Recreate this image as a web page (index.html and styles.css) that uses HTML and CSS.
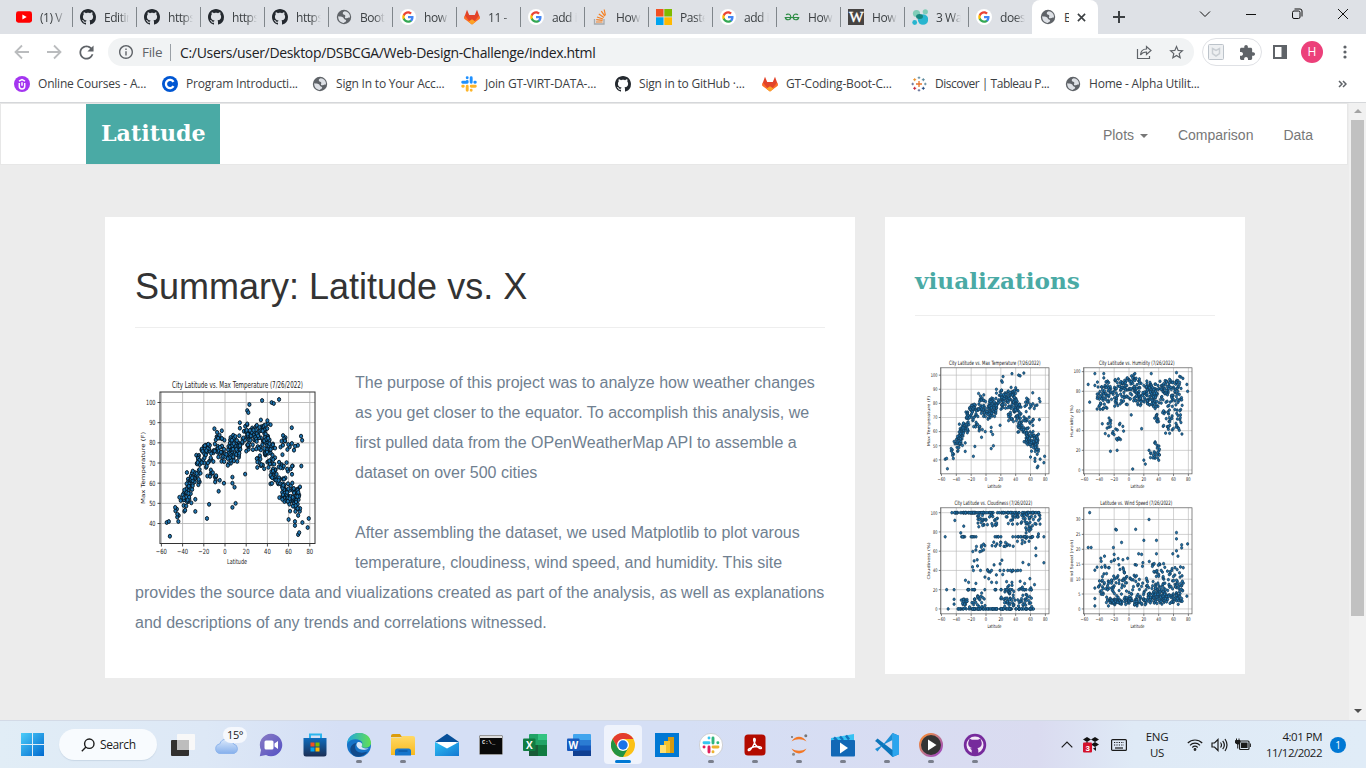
FILE: index.html
```html
<!DOCTYPE html>
<html lang="en">
<head>
<meta charset="utf-8">
<title>Latitude</title>
<link rel="stylesheet" href="styles.css">
</head>
<body>
<svg class="defs" aria-hidden="true">
  <defs>
    <linearGradient id="gWin" x1="0" y1="0" x2="1" y2="1"><stop offset="0" stop-color="#4ccdf9"/><stop offset="1" stop-color="#0069cf"/></linearGradient>
    <linearGradient id="gCloud" x1="0" y1="0" x2="0" y2="1"><stop offset="0" stop-color="#dbe9fb"/><stop offset="1" stop-color="#86b0ec"/></linearGradient>
    <linearGradient id="gChat" x1="0" y1="0" x2="1" y2="1"><stop offset="0" stop-color="#8a7cc4"/><stop offset="1" stop-color="#5350c4"/></linearGradient>
    <linearGradient id="gStore" x1="0" y1="0" x2="0" y2="1"><stop offset="0" stop-color="#0f6cbd"/><stop offset="1" stop-color="#1c2f55"/></linearGradient>
    <linearGradient id="gEdge" x1="0" y1="0" x2="1" y2="0"><stop offset="0" stop-color="#21a6e0"/><stop offset="1" stop-color="#63e052"/></linearGradient>
    <linearGradient id="gFold" x1="0" y1="0" x2="0" y2="1"><stop offset="0" stop-color="#ffd966"/><stop offset="1" stop-color="#f8b91e"/></linearGradient>
    <linearGradient id="gMail" x1="0" y1="0" x2="1" y2="1"><stop offset="0" stop-color="#2ec0f4"/><stop offset="1" stop-color="#1378d2"/></linearGradient>
    <linearGradient id="gMedia" x1="0" y1="0" x2="1" y2="1"><stop offset="0" stop-color="#ff8a26"/><stop offset=".5" stop-color="#c0768c"/><stop offset="1" stop-color="#9a3fc6"/></linearGradient>
  </defs>
  <symbol id="youtube" viewBox="0 0 16 16"><rect y="2.3" width="16" height="11.4" rx="2.4" fill="#f00"/><path d="M6.4 5.5v5l4.3-2.5z" fill="#fff"/></symbol>
  <symbol id="github" viewBox="0 0 16 16"><path d="M8 0C3.58 0 0 3.58 0 8c0 3.54 2.29 6.53 5.47 7.59.4.07.55-.17.55-.38 0-.19-.01-.82-.01-1.49-2.01.37-2.53-.49-2.69-.94-.09-.23-.48-.94-.82-1.13-.28-.15-.68-.52-.01-.53.63-.01 1.08.58 1.23.82.72 1.21 1.87.87 2.33.66.07-.52.28-.87.51-1.07-1.78-.2-3.64-.89-3.64-3.95 0-.87.31-1.59.82-2.15-.08-.2-.36-1.02.08-2.12 0 0 .67-.21 2.2.82.64-.18 1.32-.27 2-.27s1.36.09 2 .27c1.53-1.04 2.2-.82 2.2-.82.44 1.1.16 1.92.08 2.12.51.56.82 1.27.82 2.15 0 3.07-1.87 3.75-3.65 3.95.29.25.54.73.54 1.48 0 1.07-.01 1.93-.01 2.2 0 .21.15.46.55.38A8.01 8.01 0 0 0 16 8c0-4.42-3.58-8-8-8z" fill="currentColor"/></symbol>
  <symbol id="globe" viewBox="0 0 16 16"><circle cx="8" cy="8" r="7.2" fill="#5f6368"/><path d="M8.8 2.3C7 2.6 6.4 4 7 5c.5.9 2 .6 2.3 1.7.2.9-.7 1.5-.2 2.2.8 1 3.2-.6 4.9-.4.2-2.4-1-4.8-3.2-5.7z" fill="#dee1e6"/><path d="M2.2 7.3c1.6.2 3.300.3 4.600.9 1.200.6.9 1.800 2 2.300 1.100.4 1.700.8 1.200 1.700-.5.800-1.600.9-2.200 1.800-3.300-.2-5.900-3-5.600-6.700z" fill="#dee1e6"/></symbol>
  <symbol id="google" viewBox="0 0 24 24"><circle cx="12" cy="12" r="12" fill="#fff"/><g transform="translate(2.600 2.600) scale(.785)"><path d="M22.560 12.250c0-.78-.07-1.530-.2-2.250H12v4.260h5.920c-.26 1.370-1.040 2.530-2.210 3.310v2.770h3.570c2.080-1.920 3.280-4.740 3.280-8.090z" fill="#4285f4"/><path d="M12 23c2.970 0 5.460-.98 7.280-2.660l-3.570-2.770c-.98.66-2.230 1.060-3.710 1.060-2.860 0-5.290-1.930-6.160-4.530H2.180v2.840C3.990 20.530 7.700 23 12 23z" fill="#34a853"/><path d="M5.840 14.090c-.22-.66-.35-1.360-.35-2.090s.13-1.430.35-2.090V7.070H2.180C1.430 8.550 1 10.220 1 12s.43 3.450 1.180 4.930z" fill="#fbbc05"/><path d="M12 5.380c1.620 0 3.060.56 4.210 1.640l3.150-3.150C17.450 2.090 14.970 1 12 1 7.700 1 3.990 3.470 2.180 7.070l3.660 2.840C6.710 7.310 9.140 5.380 12 5.380z" fill="#ea4335"/></g></symbol>
  <symbol id="gitlab" viewBox="0 0 16 16"><path d="M3 .8 5.200 6h5.600L13 .8 15.800 8.500 8 15.500.2 8.500z" fill="#e24329"/><path d="M.9 6.500 8 15.500.2 9.800q-.3-1 .7-3.300zM15.100 6.500 8 15.500l7.800-5.700q.3-1-.7-3.300z" fill="#fc6d26"/><path d="M8 15.500 4.300 12.700 8 10.200l3.700 2.500z" fill="#fca326"/></symbol>
  <symbol id="stack" viewBox="0 0 16 16"><path d="M2.500 10v5h9.500v-5" fill="none" stroke="#a5a9ad" stroke-width="1.300"/><path d="M4 13h6.500M4.200 10.700l6.400.7M5 8l6 2M6.800 5l5.100 3.600M9.300 2.200l3.500 5M12.200.5l1.200 5.800" stroke="#f48024" stroke-width="1.200"/></symbol>
  <symbol id="microsoft" viewBox="0 0 16 16"><path d="M0 0h7.500v7.500H0z" fill="#f25022"/><path d="M8.300 0H16v7.500H8.300z" fill="#7fba00"/><path d="M0 8.300h7.500V16H0z" fill="#00a4ef"/><path d="M8.300 8.300H16V16H8.300z" fill="#ffb900"/></symbol>
  <symbol id="gfg" viewBox="0 0 16 16"><path d="M2 5.700C4 4.300 6.800 5.200 6.800 8c0 3.600-4.800 3.600-5.500.5h13.400c-.7 3.100-5.500 3.100-5.500-.5 0-2.800 2.800-3.700 4.800-2.300" fill="none" stroke="#2f8d46" stroke-width="1.200"/></symbol>
  <symbol id="wiki" viewBox="0 0 16 16"><rect width="16" height="16" fill="#464342"/><text x="8" y="13.200" text-anchor="middle" font-family="Liberation Serif" font-size="15.500" fill="#fff" stroke="#fff" stroke-width=".4">W</text></symbol>
  <symbol id="bubbles" viewBox="0 0 16 16"><circle cx="4.500" cy="4.500" r="3.600" fill="#81cdb8"/><circle cx="13.300" cy="2.800" r="2.600" fill="#81cdb8"/><circle cx="11" cy="10.500" r="5.200" fill="#28b5cf"/><circle cx="2.700" cy="13.500" r="2.400" fill="#28b5cf"/><ellipse cx="7.500" cy="7.500" rx="3.500" ry="2.500" fill="#17877e"/></symbol>
  <symbol id="udemy" viewBox="0 0 16 16"><circle cx="8" cy="8" r="8" fill="#a435f0"/><path d="M5.300 7v3.200a2.700 2.700 0 0 0 5.400 0V7M5 5.200l3-1.700 3 1.700M8 6.200v3.600" fill="none" stroke="#fff" stroke-width="1.500"/></symbol>
  <symbol id="coursera" viewBox="0 0 16 16"><circle cx="8" cy="8" r="8" fill="#0056d2"/><path d="M11.500 5.800a4.100 4.100 0 1 0 0 4.400" fill="none" stroke="#fff" stroke-width="2.300"/></symbol>
  <symbol id="slack2" viewBox="0 0 16 16"><g stroke-width="2.900" stroke-linecap="round"><path d="M6.200 5.500v.7M6.200 1.700v.1M1.700 6.200h4.300M10.200 1.700v4.500M13.800 6.200h.5" stroke="#1e90ff"/><path d="M10.200 10.200h4.100M6.200 10.200v4.100M1.700 10.200h.6M10.200 14.200v.1" stroke="#fdb52a"/></g></symbol>
  <symbol id="tableau" viewBox="0 0 16 16"><path d="M8 5v6M5 8h6" stroke="#e8762c" stroke-width="1.300"/><path d="M8 .5v2.500M6.700 1.700h2.600M14.300 6.700v2.600M13 8h2.600" stroke="#5b879b" stroke-width=".9"/><path d="M8 13v2.500M6.700 14.300h2.600M1.700 6.700v2.600M.4 8H3" stroke="#5c6692" stroke-width=".9"/><path d="M3.700 2.200v3M2.200 3.700h3" stroke="#eb912c"/><path d="M12.300 2.200v3M10.800 3.700h3" stroke="#59879b"/><path d="M3.700 10.800v3M2.200 12.300h3" stroke="#c72037"/><path d="M12.300 10.800v3M10.800 12.300h3" stroke="#1f457e"/></symbol>
</svg>

<div class="window">
  <header class="tabstrip">
    <div class="tab first"><svg><use href="#youtube"/></svg><span>(1) V</span></div>
    <div class="tab"><svg><use href="#github"/></svg><span>Editing</span></div>
    <div class="tab"><svg><use href="#github"/></svg><span>https:</span></div>
    <div class="tab"><svg><use href="#github"/></svg><span>https:</span></div>
    <div class="tab"><svg><use href="#github"/></svg><span>https:</span></div>
    <div class="tab"><svg><use href="#globe"/></svg><span>Boots</span></div>
    <div class="tab"><svg><use href="#google"/></svg><span>how</span></div>
    <div class="tab"><svg><use href="#gitlab"/></svg><span>11 -</span></div>
    <div class="tab"><svg><use href="#google"/></svg><span>add i</span></div>
    <div class="tab"><svg><use href="#stack"/></svg><span>How</span></div>
    <div class="tab"><svg><use href="#microsoft"/></svg><span>Paste</span></div>
    <div class="tab"><svg><use href="#google"/></svg><span>add i</span></div>
    <div class="tab"><svg><use href="#gfg"/></svg><span>How</span></div>
    <div class="tab"><svg><use href="#wiki"/></svg><span>How</span></div>
    <div class="tab"><svg><use href="#bubbles"/></svg><span>3 Wa</span></div>
    <div class="tab"><svg><use href="#google"/></svg><span>does</span></div>
    <div class="tab active"><svg><use href="#globe"/></svg><span>B</span><svg class="close" viewBox="0 0 10 10"><path d="M1 1l8 8M9 1L1 9"/></svg></div>
    <svg class="newtab" viewBox="0 0 12 12"><path d="M6 0v12M0 6h12"/></svg>
    <div class="controls">
      <svg viewBox="0 0 12 12"><path d="M1 3.500l5 5 5-5"/></svg>
      <svg viewBox="0 0 12 12"><path d="M1 6.500h10"/></svg>
      <svg viewBox="0 0 12 12"><rect x="1.500" y="3" width="7.500" height="7.500" rx="1.500"/><path d="M3.500 1H9q2 0 2 2v5.500"/></svg>
      <svg viewBox="0 0 12 12"><path d="M1 1l10 10M11 1L1 11"/></svg>
    </div>
  </header>

  <div class="toolbar">
    <svg class="nav-icon dim" viewBox="0 0 16 16"><path d="M15 8H2M8 1.500L1.500 8 8 14.500"/></svg>
    <svg class="nav-icon dim" viewBox="0 0 16 16"><path d="M1 8h13M8 1.500L14.500 8 8 14.500"/></svg>
    <svg class="reload" viewBox="3.500 3.500 17 17"><path d="M17.650 6.350C16.200 4.900 14.210 4 12 4c-4.420 0-7.990 3.580-7.990 8s3.570 8 7.990 8c3.730 0 6.840-2.550 7.730-6h-2.080c-.82 2.330-3.040 4-5.650 4-3.310 0-6-2.690-6-6s2.690-6 6-6c1.660 0 3.140.69 4.220 1.780L13 11h7V4z"/></svg>
    <div class="omnibox">
      <svg class="info" viewBox="2 2 20 20"><path d="M11 7h2v2h-2zm0 4h2v6h-2zm1-9C6.480 2 2 6.480 2 12s4.480 10 10 10 10-4.480 10-10S17.520 2 12 2zm0 18c-4.410 0-8-3.590-8-8s3.590-8 8-8 8 3.590 8 8-3.590 8-8 8z"/></svg>
      <span class="scheme">File</span>
      <span class="url">C:/Users/user/Desktop/DSBCGA/Web-Design-Challenge/index.html</span>
      <svg class="share" viewBox="0 0 16 16"><path d="M1.500 5v9.500h12V12M4.500 11c.3-4 2.500-6 6-6V2.500L15 6.500l-4.500 4V8c-2.700 0-4.500.7-6 3z"/></svg>
      <svg class="star" viewBox="2 2 20 19"><path d="M22 9.240l-7.190-.62L12 2 9.190 8.630 2 9.240l5.460 4.730L5.820 21 12 17.270 18.180 21l-1.630-7.030zM12 15.400l-3.760 2.270 1-4.280-3.320-2.880 4.380-.38L12 6.100l1.710 4.040 4.380.38-3.320 2.880 1 4.280z"/></svg>
    </div>
    <div class="ext">
      <svg class="shield" viewBox="0 0 16 16"><rect x=".5" y=".5" width="15" height="15" rx="1" fill="#eef0f2" stroke="#bcc3ca"/><path d="M4.500 4.500L8 6.300l3.500-1.800v5.200L8 12l-3.500-2.300z" fill="none" stroke="#c9ced3" stroke-width="1.500"/></svg>
      <svg class="puzzle" viewBox="2 1 21 21"><path d="M20.500 11H19V7c0-1.100-.9-2-2-2h-4V3.500C13 2.120 11.880 1 10.500 1S8 2.120 8 3.500V5H4c-1.100 0-1.990.9-1.990 2v3.800H3.500c1.490 0 2.700 1.210 2.700 2.700s-1.210 2.700-2.700 2.700H2V20c0 1.100.9 2 2 2h3.800v-1.500c0-1.490 1.210-2.700 2.700-2.700s2.700 1.210 2.700 2.700V22H17c1.100 0 2-.9 2-2v-4h1.500c1.380 0 2.500-1.120 2.500-2.500S21.880 11 20.500 11z"/></svg>
    </div>
    <svg class="panel" viewBox="0 0 14 14"><path d="M0 0h14v14H0zM2 2v10h6.500V2z" fill-rule="evenodd"/></svg>
    <span class="avatar">H</span>
    <svg class="dots" viewBox="0 0 4 14"><circle cx="2" cy="2" r="1.600"/><circle cx="2" cy="7" r="1.600"/><circle cx="2" cy="12" r="1.600"/></svg>
  </div>

  <div class="bookmarks">
    <a><svg><use href="#udemy"/></svg><span>Online Courses - A...</span></a>
    <a><svg><use href="#coursera"/></svg><span>Program Introducti...</span></a>
    <a><svg><use href="#globe"/></svg><span>Sign In to Your Acc...</span></a>
    <a><svg><use href="#slack2"/></svg><span>Join GT-VIRT-DATA-...</span></a>
    <a><svg><use href="#github"/></svg><span>Sign in to GitHub ·...</span></a>
    <a><svg><use href="#gitlab"/></svg><span>GT-Coding-Boot-C...</span></a>
    <a class="tight"><svg><use href="#tableau"/></svg><span>Discover | Tableau P...</span></a>
    <a><svg><use href="#globe"/></svg><span>Home - Alpha Utilit...</span></a>
    <svg class="more" viewBox="0 0 9 8"><path d="M1 1l3 3-3 3M5 1l3 3-3 3"/></svg>
  </div>

  <div class="viewport">
    <div class="page">
      <nav class="navbar">
        <a class="brand"><span>Latitude</span></a>
        <div class="links"><a>Plots <i class="caret"></i></a><a>Comparison</a><a>Data</a></div>
      </nav>
      <main class="content">
        <section class="card summary">
          <h1>Summary: Latitude vs. X</h1>
          <hr>
          <svg class="plot lead" data-kind="temp" viewBox="0 0 200 200" preserveAspectRatio="none"></svg>
          <p>The purpose of this project was to analyze how weather changes as you get closer to the equator. To accomplish this analysis, we first pulled data from the OPenWeatherMap API to assemble a dataset on over 500 cities</p>
          <p>After assembling the dataset, we used Matplotlib to plot varous temperature, cloudiness, wind speed, and humidity. This site provides the source data and viualizations created as part of the analysis, as well as explanations and descriptions of any trends and correlations witnessed.</p>
        </section>
        <aside class="card side">
          <h2><span>viualizations</span></h2>
          <hr>
          <div class="thumbs">
            <svg class="plot" data-kind="temp" viewBox="0 0 200 200" preserveAspectRatio="none"></svg>
            <svg class="plot" data-kind="humidity" viewBox="0 0 200 200" preserveAspectRatio="none"></svg>
            <svg class="plot" data-kind="cloud" viewBox="0 0 200 200" preserveAspectRatio="none"></svg>
            <svg class="plot" data-kind="wind" viewBox="0 0 200 200" preserveAspectRatio="none"></svg>
          </div>
        </aside>
      </main>
    </div>
    <div class="scrollbar"><i class="up"></i><div class="thumb"></div><i class="down"></i></div>
  </div>

  <footer class="taskbar">
    <svg class="start" viewBox="0 0 23 23"><path d="M0 0h11v11H0zM12 0h11v11H12zM0 12h11v11H0zM12 12h11v11H12z" fill="url(#gWin)"/></svg>
    <div class="search"><svg viewBox="0 0 14 14"><circle cx="8.300" cy="5.700" r="4.700"/><path d="M5 9L.8 13.200"/></svg><span>Search</span></div>
    <div class="apps">
      <div><svg viewBox="0 0 24 24"><rect x="6" y="1" width="18" height="16" rx="1" fill="#f8f8f8"/><rect y="7" width="18" height="16" rx="1" fill="#32312f"/><path d="M6 7h12v10H6z" fill="#bdbdbd"/></svg></div>
      <div class="weather"><svg viewBox="0 0 24 24"><path d="M5 20.500a4.800 4.800 0 0 1-.3-9.500A7.300 7.300 0 0 1 18.500 11 4.900 4.900 0 0 1 19 20.500z" fill="url(#gCloud)" stroke="#8eb5ed"/></svg><b>15°</b></div>
      <div><svg viewBox="0 0 24 24"><path d="M12 .8a11.200 11.200 0 1 1-5 21.200L.8 23.200 2 17A11.200 11.200 0 0 1 12 .8z" fill="url(#gChat)"/><rect x="5.500" y="7.500" width="9" height="9" rx="1.500" fill="#fff"/><path d="M15.500 10.500L19 8v8l-3.500-2.500z" fill="#fff"/></svg></div>
      <div><svg viewBox="0 0 24 24"><path d="M7 5V1.500h11V5" fill="none" stroke="#2bb5ee" stroke-width="2"/><path d="M.5 5h23v16q0 2.500-2.500 2.500H3Q.5 23.500.5 21z" fill="url(#gStore)"/><path d="M7.500 9.500h4v4h-4z" fill="#f25022"/><path d="M12.500 9.500h4v4h-4z" fill="#7fba00"/><path d="M7.500 14.500h4v4h-4z" fill="#00a4ef"/><path d="M12.500 14.500h4v4h-4z" fill="#ffb900"/></svg></div>
      <div class="run"><svg viewBox="0 0 24 24"><circle cx="12" cy="12" r="12" fill="#1673c8"/><path d="M0 11C1-3.500 23-3.500 24 9.500c.2 5-5.800 6.500-9 4.500-1.500-1 .8-2 .2-4.500C14 6 4 4 0 11z" fill="url(#gEdge)"/><path d="M9.500 10c-4 5 .5 12.500 11 8.500-3 5-9.500 6.500-14 4C1 18 3 11 9.500 10z" fill="#114a8b"/><path d="M11 9c-4 3 0 9 8 7.500 1.500-.2 2.800-1.300 2.500-1-5 .5-8-1.500-6.500-3 .7-2.500-1.500-4-4-3.500z" fill="#d8e6f7"/></svg></div>
      <div class="run"><svg viewBox="0 0 24 24"><path d="M0 3q0-2 2-2h7l2 3H0z" fill="#dc9c0a"/><path d="M0 4.500h10l1.500-1.500H22q2 0 2 2v17H0z" fill="url(#gFold)"/><path d="M4 22.500V18q0-2.500 2.500-2.500h11Q20 15.500 20 18v4.500z" fill="#1675cb"/><path d="M7.500 18h9" stroke="#0b579f" stroke-width="1.300"/></svg></div>
      <div><svg viewBox="0 0 24 24"><path d="M0 9L12 .8 24 9z" fill="#07509a"/><path d="M3 9h18v9H3z" fill="#fff"/><path d="M0 9l12 6.500L24 9v14H0z" fill="url(#gMail)"/></svg></div>
      <div><svg viewBox="0 0 24 24"><rect x=".5" y="2.500" width="23" height="19" rx="1" fill="#090909" stroke="#999"/><path d="M1 4h22" stroke="#ddd" stroke-width="2"/><text x="3" y="11" font-family="Liberation Mono" font-weight="bold" font-size="5.500" fill="#eee">C:\_</text></svg></div>
      <div><svg viewBox="0 0 24 24"><rect x="6" y="1" width="18" height="22" rx="1" fill="#21a366"/><path d="M15 1h9v6h-9z" fill="#33c481"/><path d="M6 12h9v11H6z" fill="#185c37"/><path d="M15 12h9v11h-9z" fill="#107c41"/><rect y="5.500" width="12.500" height="12.500" rx="1" fill="#107c41"/><text x="6.300" y="15.500" text-anchor="middle" class="letter">X</text></svg></div>
      <div><svg viewBox="0 0 24 24"><rect x="6" y="1" width="18" height="22" rx="1" fill="#41a5ee"/><path d="M6 7h18v6H6z" fill="#2b7cd3"/><path d="M6 12.500h18V18H6z" fill="#185abd"/><path d="M6 17.500h18V23H6z" fill="#103f91"/><rect y="5.500" width="12.500" height="12.500" rx="1" fill="#185abd"/><text x="6.300" y="15.500" text-anchor="middle" class="letter">W</text></svg></div>
      <div class="run focus"><svg viewBox="0 0 24 24"><circle cx="12" cy="12" r="12" fill="#fbc116"/><path d="M1.600 6A12 12 0 0 1 22.400 6H12L7 15z" fill="#e33b2e"/><path d="M1.600 6A12 12 0 0 0 12 24l5.200-9L12 17l-5.200-2z" fill="#229342"/><circle cx="12" cy="12" r="6" fill="#fff"/><circle cx="12" cy="12" r="4.700" fill="#1a73e8"/></svg></div>
      <div><svg viewBox="0 0 24 24"><path d="M0 0h24v24H0z" fill="#0078d4"/><path d="M13 4h6v16h-6z" fill="#d79a0f"/><path d="M9 8h6v12H9z" fill="#f2c22e"/><path d="M5 12h6v8H5z" fill="#ffe071"/></svg></div>
      <div class="run"><svg viewBox="0 0 24 24"><circle cx="12" cy="12" r="11.600" fill="#fff" stroke="#bbb" stroke-width=".6"/><g fill="none" stroke-width="2.900" stroke-linecap="round"><path d="M5 9.700h5M10 5v.1" stroke="#36c5f0"/><path d="M14 5v5M18.800 9.700h.1" stroke="#2eb67d"/><path d="M14 14h5M14 18.800v.1" stroke="#ecb22e"/><path d="M10 14v5M5 14h.1" stroke="#e01e5a"/></g></svg></div>
      <div class="run"><svg viewBox="0 0 24 24"><rect x="1.500" y="1.500" width="21" height="21" rx="3.500" fill="#b30b00"/><path d="M11 5.500c2-.5 1.500 3-1 7.500-2 3.500-4 5.500-4.700 4.300-.8-1.700 6-4.300 11.200-3.600 3 .4 2.300 2.600 0 1.700C12.500 14 9.800 7 11 5.500z" fill="none" stroke="#fff" stroke-width="1.400"/></svg></div>
      <div class="run"><svg viewBox="0 0 24 24"><path d="M4.500 8.500C8 2 16 2 19.500 8.500 15 5.500 9 5.500 4.500 8.500zM4.500 15.500C8 22 16 22 19.500 15.500 15 18.500 9 18.500 4.500 15.500z" fill="#f37726"/><circle cx="18.800" cy="2.700" r="1.500" fill="#767677"/><circle cx="6.500" cy="21.300" r="1.500" fill="#8a8a8a"/><circle cx="5" cy="4" r=".9" fill="#616262"/></svg></div>
      <div class="run"><svg viewBox="0 0 24 24"><path d="M0 5l23-4v7H0z" fill="#37c2f3"/><path d="M3 4.500l3 3M9 3.500l3 3.500M15 2.500l3 4" stroke="#1474bd" stroke-width="2.500"/><rect y="7" width="24" height="16.500" rx="1" fill="#1268b6"/><path d="M9 9.500v11L17 15z" fill="#fff"/></svg></div>
      <div class="run"><svg viewBox="0 0 24 24"><path d="M17.500 0L24 2.800v18.400L17.500 24 1.500 9 0 8l2.500-2.500L17.500 17z" fill="#0b75bb"/><path d="M17.500 0L2.500 18.500 0 16l17.500-9z" fill="#1c8fd6"/><path d="M17.500 0L24 2.800v18.400L17.500 24z" fill="#2aa5ee"/></svg></div>
      <div class="run"><svg viewBox="0 0 24 24"><circle cx="12" cy="12" r="11" fill="#343434" stroke="url(#gMedia)" stroke-width="2"/><path d="M9 6.500v11l8.500-5.500z" fill="#fff"/></svg></div>
      <div class="run"><svg viewBox="0 0 24 24"><circle cx="12" cy="12" r="11.200" fill="#762a9c"/><circle cx="12" cy="12" r="8.500" fill="#f2e6f7"/><path d="M6 7.500l.5-2 2.500 1.200h6l2.500-1.200.5 2c1.700 3 .7 7-3.500 7.500l.8 2V21H8.700v-4L7 15.500l2.500-.5C5.300 14.500 4.300 10.500 6 7.500z" fill="#762a9c"/></svg></div>
    </div>
    <div class="tray">
      <svg class="chev" viewBox="0 0 12 7"><path d="M.7 6.300L6 1l5.300 5.300"/></svg>
      <svg class="dropbox" viewBox="0 0 16 16"><path d="M0 2.500L4 0l4 2.500L12 0l4 2.500L12 5 8 2.500 4 5zM0 7.500L4 5l4 2.500L12 5l4 2.500L12 10 8 7.500 4 10z"/><path d="M10 11.500l3-1.500v4z"/><rect y="5.500" width="9" height="10" rx="1" fill="#d4112c"/><text x="4.500" y="13.500" text-anchor="middle" font-family="Liberation Sans" font-weight="bold" font-size="8" fill="#fff">3</text></svg>
      <svg class="keyboard" viewBox="0 0 16 12"><rect x=".6" y=".6" width="14.800" height="10.800" rx="1"/><path d="M3 3.500h10M3 6h10" stroke-dasharray="1.200 1.200"/><path d="M4 9h8"/></svg>
      <span class="lang">ENG<br>US</span>
      <svg class="wifi" viewBox="0 0 16 13"><path d="M.8 5a10.200 10.200 0 0 1 14.400 0M3 7.300a7 7 0 0 1 10 0M5.300 9.500a3.900 3.900 0 0 1 5.400 0"/><circle cx="8" cy="11.500" r=".8"/></svg>
      <svg class="volume" viewBox="0 0 17 14"><path d="M1 5v4h2.500L7 12.500v-11L3.500 5zM9.500 4.500q2 2.500 0 5M11.700 2.800q3.300 4.200 0 8.400M14 1q4 6 0 12"/></svg>
      <svg class="battery" viewBox="0 0 16 13"><rect x="4.500" y="3" width="9.500" height="8.500" rx="1"/><path d="M6.500 5h5.500v4.500H6.500z" class="fill"/><path d="M.5 2.500h4.500v2.500q-2.200 2.500-4.500 0zM1.500 .5v2M4 .5v2M2.700 6v4.500M15.400 5.500v3.500" class="fill" stroke-width="1"/></svg>
      <span class="clock">4:01 PM<br>11/12/2022</span>
      <span class="badge">1</span>
    </div>
  </footer>
</div>
<script src="plots.js"></script>
</body>
</html>
```
FILE: styles.css
```css
* { box-sizing: border-box; }
body { margin: 0; overflow: hidden; font-family: "Open Sans", "Noto Sans", sans-serif; color: #3c4043; }
.defs { position: absolute; width: 0; height: 0; }
.window { display: flex; flex-direction: column; width: 1366px; height: 768px; background: #fff; }
svg { display: block; flex: none; }

.tabstrip { display: flex; height: 34px; padding-left: 8px; background: #dee1e6; }
.tab { display: flex; align-items: center; gap: 8px; width: 64px; padding-left: 8px; font-size: 12px; letter-spacing: -.45px; background: linear-gradient(#80868b, #80868b) 0 7px / 1px 20px no-repeat; }
.tab.first, .tab.active { background-image: none; }
.tab svg { width: 16px; height: 16px; color: #24292f; }
.tab span { width: 25px; overflow: hidden; white-space: nowrap; -webkit-mask: linear-gradient(90deg, #000 60%, transparent); mask: linear-gradient(90deg, #000 60%, transparent); }
.tab.active { width: 66px; background: #fff; border-radius: 8px 8px 0 0; }
.tab.active span { width: 5px; -webkit-mask: none; mask: none; }
.tab .close { width: 9px; height: 9px; fill: none; stroke: #3c4043; stroke-width: 1.800; }
.newtab { width: 12px; height: 12px; margin: 11px 0 0 15px; stroke: #3c4043; stroke-width: 2; }
.controls { display: flex; gap: 34px; margin: 8px 0 0 74px; }
.controls svg { width: 12px; height: 12px; fill: none; stroke: #111; stroke-width: 1; }

.toolbar { display: flex; align-items: center; height: 36px; padding-left: 14px; }
.nav-icon { width: 16px; height: 16px; margin-right: 16px; fill: none; stroke: #babcbe; stroke-width: 1.800; }
.reload { width: 15px; height: 15px; margin: 0 14px 0 1px; fill: #5f6368; }
.omnibox { display: flex; align-items: center; width: 1086px; height: 28px; padding-left: 11px; border-radius: 14px; background: #f1f3f4; font-size: 14px; }
.info { width: 14px; height: 14px; fill: #5f6368; }
.scheme { width: 29px; height: 17px; margin-left: 9px; border-right: 1px solid #9aa0a6; line-height: 16px; font-size: 13.500px; letter-spacing: -.3px; color: #5f6368; }
.url { width: 965px; padding-left: 9px; font-size: 14px; letter-spacing: -.32px; color: #202124; white-space: nowrap; }
.share { width: 16px; height: 16px; fill: none; stroke: #5f6368; stroke-width: 1.200; }
.star { width: 15px; height: 14px; margin-left: 17px; fill: #5f6368; }
.ext { display: flex; align-items: center; justify-content: space-between; width: 60px; height: 28px; margin-left: 8px; padding: 0 6px 0 5px; border: 1px solid #dfe1e5; border-radius: 14px; }
.shield { width: 16px; height: 16px; }
.puzzle { width: 15px; height: 15px; fill: #5f6368; }
.panel { width: 14px; height: 14px; margin-left: 11px; fill: #5f6368; }
.avatar { width: 22px; height: 22px; margin-left: 14px; border-radius: 50%; background: #ec407a; color: #fff; font-size: 12px; line-height: 22px; text-align: center; }
.dots { width: 4px; height: 14px; margin-left: 20px; fill: #5f6368; }

.bookmarks { display: grid; grid-template-columns: 148px 150px 149px 154px 147px 149px 154px 271px auto; align-items: center; height: 33px; padding: 0 0 5px 14px; border-bottom: 1px solid #d5d7da; font-size: 12px; letter-spacing: -.2px; }
.bookmarks a { display: flex; align-items: center; gap: 8px; white-space: nowrap; }
.bookmarks .tight { letter-spacing: -.48px; }
.bookmarks a svg { width: 16px; height: 16px; color: #24292f; }
.more { width: 9px; height: 8px; margin-left: 2px; fill: none; stroke: #5f6368; stroke-width: 1.500; }

.viewport { display: flex; height: 617px; }
.page { width: 1349px; overflow: hidden; background: #ececec; font-family: "Liberation Sans", Arial, sans-serif; }
.navbar { display: flex; justify-content: space-between; height: 62px; padding: 0 34px 0 85px; border: 1px solid #e7e7e7; margin-right: 1px; background: #fff; }
.brand { display: flex; align-items: center; width: 134px; height: 60px; padding: 0 0 3px 15px; background: #4aaaa5; color: #fff; }
.brand span, .side h2 span { font-family: "DejaVu Serif", Georgia, serif; font-weight: bold; white-space: nowrap; }
.brand span { font-size: 22.200px; }
.links { display: flex; gap: 30px; align-items: center; padding-top: 2px; font-size: 14px; color: #777; }
.caret { display: inline-block; margin-left: 2px; vertical-align: middle; border: 4px solid transparent; border-top-color: #777; border-bottom: 0; }
.content { display: flex; align-items: flex-start; gap: 30px; padding: 52px 0 0 105px; }
.card { background: #fff; padding: 0 30px; }
.summary { width: 750px; height: 461px; padding-top: 50px; }
.side { width: 360px; height: 457px; padding-top: 49px; }
h1, h2 { margin: 0; font-weight: 500; color: #333; }
h1 { font-size: 36px; line-height: 40px; }
h2 { height: 30px; line-height: 29px; color: #4aaaa5; font-size: 23.200px; }
hr { height: 1px; margin: 20px 0; border: 0; background: #eee; }
.side hr { margin: 19px 0 35px; }
.lead { float: left; width: 200px; height: 200px; margin: 0 20px 0 0; }
.summary hr { margin-bottom: 40px; }
p { margin: 0 0 30px; font-size: 16px; line-height: 30px; color: #708090; }
.thumbs { display: grid; grid-template-columns: 140px 140px; column-gap: 3px; margin-left: 8px; }
.thumbs .plot { width: 140px; height: 140px; }
.plot text { font-family: "DejaVu Sans", sans-serif; fill: #222; }
.frame { fill: none; stroke: #333; stroke-width: 1; }
.gridline { stroke: #b8b8b8; stroke-width: .9; }
.tick { stroke: #333; stroke-width: .9; }
.dot { fill: #1f77b4; stroke: #06121c; stroke-width: .9; }
.thumbs .dot { stroke: #12354f; stroke-width: 1; }
.thumbs .frame { stroke: #555; }
.scrollbar { display: flex; flex-direction: column; align-items: center; width: 17px; background: #f1f1f1; }
.scrollbar i { width: 0; border: 4px solid transparent; }
.up { margin-top: 2px; border-bottom-color: #a3a3a3 !important; }
.thumb { width: 13px; height: 496px; margin-top: 7px; background: #c1c1c1; }
.down { margin-top: 93px; border-top-color: #505050 !important; }

.taskbar { display: flex; align-items: center; height: 48px; padding-left: 21px; background: linear-gradient(90deg, #e1edf6, #dde8f6 15%, #d5dff5 25%, #d5dff5 50%, #dadbf0 76%, #dfeaf6 83%, #e0ecf7); border-top: 1px solid #d3dae6; color: #1b1b1b; }
.start { width: 23px; height: 23px; }
.search { display: flex; align-items: center; width: 98px; height: 31px; margin-left: 15px; padding-left: 22px; gap: 5px; border-radius: 16px; background: #f8fbfe; box-shadow: 0 1px 1px #c9d7e6; font-size: 12px; letter-spacing: -.4px; }
.search svg { width: 14px; height: 14px; fill: none; stroke: #1b1b1b; stroke-width: 1.400; }
.apps { display: flex; margin-left: 4px; }
.apps div { position: relative; display: flex; justify-content: center; align-items: center; width: 44px; height: 47px; }
.apps svg { position: relative; width: 24px; height: 24px; }
.run::after { content: ""; position: absolute; left: 19px; bottom: 5px; width: 6px; height: 3px; border-radius: 2px; background: #7a7f8c; }
.focus::before { content: ""; position: absolute; left: 3px; top: 4px; width: 38px; height: 39px; border-radius: 4px; background: #eff3fc; }
.focus::after { left: 14px; width: 16px; background: #0078d4; }
.weather b { position: absolute; left: 18px; top: 6px; width: 24px; height: 16px; border-radius: 8px; background: #f5f8fd; font-weight: 400; font-size: 11px; line-height: 16px; text-align: center; letter-spacing: -.5px; }
.letter { font: bold 10px "Open Sans", sans-serif; fill: #fff; }
.tray { display: flex; align-items: center; margin-left: 64px; font-size: 11.500px; letter-spacing: -.35px; line-height: 15.500px; }
.tray svg { fill: none; stroke: #1b1b1b; stroke-width: 1.200; }
.chev { width: 12px; height: 7px; }
.tray .dropbox { width: 16px; height: 16px; margin-left: 10px; fill: #111; stroke: none; }
.keyboard { width: 16px; height: 12px; margin-left: 12px; }
.lang { width: 32px; margin-left: 14px; text-align: center; }
.wifi { width: 16px; height: 13px; margin-left: 14px; }
.volume { width: 17px; height: 14px; margin-left: 8px; }
.battery { width: 16px; height: 13px; margin-left: 7px; }
.battery .fill { fill: #1b1b1b; }
.clock { width: 62px; margin-left: 9px; text-align: right; white-space: nowrap; letter-spacing: -.5px; }
.badge { width: 16px; height: 16px; margin-left: 8px; border-radius: 50%; background: #0078d4; color: #fff; text-align: center; font-size: 10px; line-height: 16px; }
```
FILE: plots.js
```js
// Scatter charts of city weather against latitude.
const NS = "http://www.w3.org/2000/svg";

// Each band: [lat from, lat to, low at start, high at start, low at end, high at end, count]
const charts = {
  temp: {
    title: "City Latitude vs. Max Temperature (7/26/2022)", titleX: [47, 178], label: "Max Temperature (F)", jitter: 2.2,
    ticks: [40, 50, 60, 70, 80, 90, 100], y: v => 34.5 + (100 - v) * 2.017,
    bands: [[-46, -35, 42, 50, 46, 56, 9], [-40, -33, 47, 55, 50, 64, 28], [-35, -23, 56, 64, 60, 68, 34],
      [-28, -18, 67, 74, 70, 80, 24], [-19, -2, 66, 80, 72, 85, 54], [-16, -6, 61, 65, 61, 65, 11], [0, 14, 70, 80, 72, 85, 56],
      [12, 25, 75, 86, 77, 89, 34], [21, 40, 79, 89, 78, 90, 64], [27, 42, 66, 77, 70, 80, 22], [37, 48, 70, 84, 64, 80, 42],
      [41, 56, 61, 67, 55, 62, 24], [50, 66, 66, 70, 64, 70, 14], [52, 71, 52, 62, 48, 58, 66], [52, 71, 77, 83, 76, 83, 18], [59, 71, 45, 54, 46, 54, 16]],
    points: [[-55, 40.5], [-53, 41], [-52, 33.7], [23, 99], [35, 101], [44, 100], [46, 99.5], [51, 101.5], [21, 96], [22, 95], [7, 48], [10, 50], [9, 58], [-15, 49.5], [-17, 42.5], [-6, 56], [-1, 60], [19, 64.5], [63, 87.5], [72, 68.5], [79, 42.500], [78, 38], [73, 40.5], [69, 34.5], [70, 35.5], [66, 41], [66, 39], [69, 44], [60, 42], [14, 90], [40, 91], [43, 89], [7, 60], [7, 63], [-47, 48], [-44, 41], [-43, 53], [-28, 52], [-28, 46], [-10, 87], [-3, 86]]
  },
  humidity: {
    title: "City Latitude vs. Humidity (7/26/2022)", titleX: [57, 165], label: "Humidity (%)", jitter: 3,
    ticks: [0, 20, 40, 60, 80, 100], y: v => 29.5 + (100 - v) * 1.405,
    bands: [[-42, -15, 60, 88, 65, 85, 70], [-37, -7, 79, 96, 76, 92, 22], [-12, 15, 65, 94, 72, 95, 95], [10, 37, 68, 87, 66, 87, 80],
      [24, 49, 70, 90, 70, 88, 54], [46, 72, 68, 92, 70, 95, 72], [32, 56, 42, 68, 40, 68, 30], [50, 72, 36, 66, 38, 66, 36], [27, 44, 13, 20, 12, 19, 14], [32, 41, 31, 34, 16, 22, 9], [-30, -9, 41, 54, 24, 44, 24]],
    points: [[-55, 87], [-53, 69], [-46, 98], [-46, 86], [-25, 19], [-16, 20], [5, 1], [20, 10], [22, 6], [27, 20], [17, 42], [79, 80], [78, 87], [-36, 47], [3, 56], [-43, 62], [-32, 37], [30, 98], [64, 99], [8, 98], [-34, 98]]
  },
  cloud: {
    title: "City Latitude vs. Cloudiness (7/26/2022)", titleX: [55, 166], label: "Cloudiness (%)", jitter: 0,
    ticks: [0, 20, 40, 60, 80, 100], y: v => 31 + (100 - v) * 1.375,
    bands: [[-43, 73, 100, 100, 100, 100, 110], [-12, 15, 84, 99, 86, 99, 34], [27, 73, 88, 99, 88, 99, 46], [42, 73, 66, 85, 73, 89, 20], [-34, 73, 75, 75, 75, 75, 30],
      [-38, 65, 0, 0, 0, 0, 90], [-35, 0, 1, 10, 2, 18, 40], [18, 62, 2, 11, 2, 13, 46], [20, 64, 12, 25, 13, 24, 20], [-36, 65, 20, 20, 20, 20, 26], [-30, 68, 24, 64, 24, 64, 36], [-35, 60, 40, 40, 40, 40, 12], [-14, 43, 61, 69, 61, 70, 20]],
    points: [[-55, 75], [-53, 20], [-51, 0], [78, 75], [78, 48], [-43, 10], [-43, 5], [-43, 20], [-46, 100], [-34, 79], [-42, 92], [-30, 86]]
  },
  wind: {
    title: "Latitude vs. Wind Speed (7/26/2022)", titleX: [59, 162], label: "Wind Speed (mph)", jitter: .8,
    ticks: [0, 5, 10, 15, 20, 25, 30], y: v => 40.7 + (30 - v) * 4.26,
    bands: [[-40, -20, 5, 10, 5, 10, 34], [-30, 14, 1.500, 3.500, 1.500, 3.500, 85], [-38, -15, 10, 17, 10, 17, 16], [-18, 25, 4, 11, 4, 11, 50], [15, 50, 2, 5, 2, 6, 75], [25, 73, 5, 9, 4, 9, 66], [45, 73, 2, 5, 2, 5, 42], [25, 73, 9, 16, 9, 14, 44], [-17, 25, 10, 18, 10, 16, 15]],
    points: [[-53, 32.3], [27, 30], [-18, 26.7], [-17, 26.5], [9, 26.7], [-10, 22.3], [-55, 20.6], [-51, 20.6], [-21, 20.6], [20, 23], [37, 23], [64, 25.600], [64, 23.500], [64, 19.500], [79, 21.800], [71, 21.500], [71, 20.500], [78, 4.300], [-46, 13], [-46, 7], [-46, 3.500], [-46, 1], [-43, 14], [-38, 17], [-33, 17.700], [-20, 18.300], [37, 18.500], [59, 18.500], [66, 17.700], [13, 18.500], [17, 18.300]]
  }
};

function add(parent, tag, attrs, text) {
  const node = document.createElementNS(NS, tag);
  for (const key in attrs) node.setAttribute(key, attrs[key]);
  if (text !== undefined) node.textContent = text;
  parent.appendChild(node);
  return node;
}

function draw(svg) {
  const chart = charts[svg.dataset.kind];
  let seed = 4817;
  const random = () => (seed = (seed * 16807) % 2147483647) / 2147483647;
  const noise = () => random() + random() - random() - random();
  const x = lat => 90 + lat * 1.06;
  for (let lat = -60; lat <= 80; lat += 20) {
    add(svg, "path", { class: "gridline", d: `M${x(lat)} 24V175.5` });
    add(svg, "path", { class: "tick", d: `M${x(lat)} 175.500v3` });
    add(svg, "text", { transform: `translate(${x(lat)} 186) scale(.85 1.15)`, "font-size": 6.200, "text-anchor": "middle" }, String(lat).replace("-", "−"));
  }
  for (const tick of chart.ticks) {
    const y = chart.y(tick);
    add(svg, "path", { class: "gridline", d: `M25 ${y}H180` });
    add(svg, "path", { class: "tick", d: `M22.500 ${y}h3` });
    add(svg, "text", { transform: `translate(20.500 ${y + 2.600}) scale(.8 1.150)`, "font-size": 6.200, "text-anchor": "end" }, tick);
  }
  const dot = (lat, value) => add(svg, "ellipse", { class: "dot", cx: x(lat), cy: chart.y(value), rx: 1.600, ry: 1.950 });
  for (const [a, b, lo, hi, lo2, hi2, count] of chart.bands) {
    for (let i = 0; i < count; i++) {
      const t = random();
      const low = lo + (lo2 - lo) * t;
      const high = hi + (hi2 - hi) * t;
      const value = low + (high - low) * random() + noise() * chart.jitter;
      dot(a + (b - a) * t + noise() * (chart.jitter ? 1.500 : .4), Math.max(0, Math.min(value, 100)));
    }
  }
  chart.points.forEach(([lat, value]) => dot(lat, value));
  add(svg, "rect", { class: "frame", x: 25, y: 24, width: 155, height: 151.5 });
  const [from, to] = chart.titleX;
  add(svg, "text", { x: from - 10, y: 20, "font-size": 8.500, textLength: to - from, lengthAdjust: "spacingAndGlyphs" }, chart.title);
  add(svg, "text", { x: 92, y: 196, "font-size": 7, textLength: 20, lengthAdjust: "spacingAndGlyphs" }, "Latitude");
  const width = chart.label.length * 3.800;
  add(svg, "text", { transform: `translate(10 ${100 + width / 2}) rotate(-90)`, "font-size": 5.500, textLength: width, lengthAdjust: "spacingAndGlyphs" }, chart.label);
}

document.querySelectorAll(".plot").forEach(draw);
```
